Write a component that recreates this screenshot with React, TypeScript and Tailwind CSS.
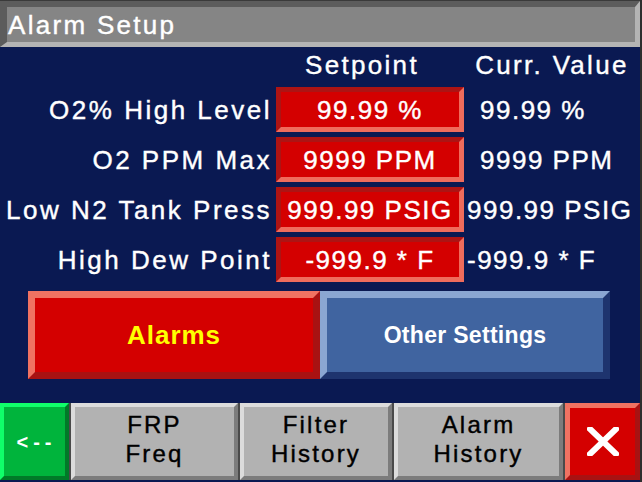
import React from 'react';

const rows = [
  { label: 'O2% High Level', setpoint: '99.99 %', value: '99.99 %', pad: 'pl-[16px]' },
  { label: 'O2 PPM Max', setpoint: '9999 PPM', value: '9999 PPM', pad: 'pl-[16px]' },
  { label: 'Low N2 Tank Press', setpoint: '999.99 PSIG', value: '999.99 PSIG', pad: 'pl-[3px]' },
  { label: 'High Dew Point', setpoint: '-999.9 * F', value: '-999.9 * F', pad: 'pl-[3px]' },
];

function NavButton({ top, bottom, width }: { top: string; bottom: string; width: string }) {
  return (
    <div
      className={`${width} h-full bg-[#b2b2b2] border-t-[4px] border-l-[4px] border-b-[4px] border-r-[4px] border-t-[#dcdcdc] border-l-[#dcdcdc] border-b-[#7c7c7c] border-r-[#7c7c7c] flex flex-col items-center justify-center pb-[5px] text-black text-[24px] tracking-[2.2px] leading-[29px] [-webkit-text-stroke:0.4px_black]`}
    >
      <span>{top}</span>
      <span>{bottom}</span>
    </div>
  );
}

export default function App() {
  return (
    <div className="w-[642px] h-[482px] bg-[#0a1952] flex flex-col overflow-hidden border-r-2 border-[#2e2e2e] font-['Liberation_Sans',Arial,sans-serif]">
      {/* title bar */}
      <div className="h-[47px] border-t border-[#3a3a3a] shrink-0">
        <div className="h-full bg-[#858585] border-t-[6px] border-l-[7px] border-b-[5px] border-r-[5px] border-t-[#5c5c5c] border-l-[#5c5c5c] border-b-[#b4b4b4] border-r-[#b4b4b4] flex items-center pl-[1px]">
          <span className="text-white text-[26px] tracking-[2.3px] leading-none [-webkit-text-stroke:0.4px_white]">Alarm Setup</span>
        </div>
      </div>

      {/* setpoint table */}
      <div className="grid grid-cols-[276px_188px_1fr] grid-rows-[35px_45px_45px_45px_45px] gap-y-[5px] text-white text-[26px] leading-none [-webkit-text-stroke:0.4px_white]">
        <div />
        <div className="flex items-center justify-center pr-[16px] tracking-[2.3px]">Setpoint</div>
        <div className="flex items-center justify-center tracking-[2.3px]">Curr. Value</div>
        {rows.map((r) => (
          <React.Fragment key={r.label}>
            <div className="flex items-center justify-end pr-[4px] tracking-[2.5px]">{r.label}</div>
            <div className="bg-[#d40000] border-[5px] border-t-[#ad1414] border-l-[#ad1414] border-b-[#ef6c5c] border-r-[#ef6c5c] flex items-center justify-center tracking-[1.5px]">
              {r.setpoint}
            </div>
            <div className={`flex items-center tracking-[1.5px] ${r.pad}`}>{r.value}</div>
          </React.Fragment>
        ))}
      </div>

      {/* big buttons */}
      <div className="flex mt-[9px] pl-[28px] h-[88px]">
        <div className="w-[292px] h-full bg-[#d40000] border-[7px] border-t-[#f07262] border-l-[#f07262] border-b-[#a81212] border-r-[#a81212] flex items-center justify-center">
          <span className="text-[#ffff00] font-bold text-[26px] tracking-[1px] leading-none">Alarms</span>
        </div>
        <div className="w-[290px] h-full bg-[#4064a0] border-[7px] border-t-[#8aa6d2] border-l-[#8aa6d2] border-b-[#1e346e] border-r-[#1e346e] flex items-center justify-center">
          <span className="text-white font-bold text-[23px] tracking-[0.3px] leading-none">Other Settings</span>
        </div>
      </div>

      {/* bottom navigation */}
      <div className="mt-[24px] h-[77px] flex gap-[2px] bg-[#4a4a4a]">
        <div className="w-[69px] h-full bg-[#00b43c] border-[4px] border-t-[#10ff6a] border-l-[#10ff6a] border-b-[#007a28] border-r-[#007a28] flex items-center justify-center pl-[4px]">
          <span className="text-white font-bold text-[20px] tracking-[5px] leading-none">&lt;--</span>
        </div>
        <NavButton top="FRP" bottom="Freq" width="w-[167px]" />
        <NavButton top="Filter" bottom="History" width="w-[152px]" />
        <NavButton top="Alarm" bottom="History" width="w-[169px]" />
        <div className="flex-1 h-full bg-[#d40000] border-[5px] border-t-[#f07262] border-l-[#f07262] border-b-[#a81212] border-r-[#a81212] flex items-center justify-center">
          <svg width="32" height="29" viewBox="0 0 32 29">
            <path d="M3 2 L29 27 M29 2 L3 27" stroke="#ffffff" strokeWidth="6" strokeLinecap="square" />
          </svg>
        </div>
      </div>
    </div>
  );
}
